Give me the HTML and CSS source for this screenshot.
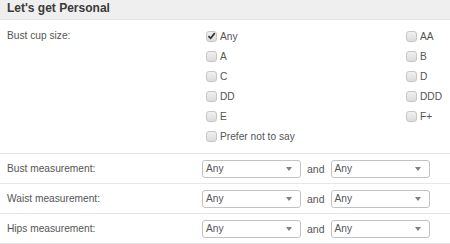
FILE: index.html
```html
<!DOCTYPE html>
<html lang="en">

<head>
    <meta charset="UTF-8">
    <meta name="viewport" content="width=device-width, initial-scale=1.0">
    <title>Let's get Personal</title>
    <link rel="stylesheet" href="styles.css">
</head>

<body>
    <div class="panel">
        <h2 class="panel-title">Let's get Personal</h2>

        <div class="row cup-row">
            <div class="row-label">Bust cup size:</div>
            <div class="cup-grid">
                <label class="option"><span class="box checked"><svg viewBox="0 0 10 10" width="10" height="10"><path d="M1.6 5.2 L4 7.6 L8.6 1.8" fill="none" stroke="#333" stroke-width="1.9"/></svg></span>Any</label>
                <label class="option"><span class="box"></span>AA</label>
                <label class="option"><span class="box"></span>A</label>
                <label class="option"><span class="box"></span>B</label>
                <label class="option"><span class="box"></span>C</label>
                <label class="option"><span class="box"></span>D</label>
                <label class="option"><span class="box"></span>DD</label>
                <label class="option"><span class="box"></span>DDD</label>
                <label class="option"><span class="box"></span>E</label>
                <label class="option"><span class="box"></span>F+</label>
                <label class="option"><span class="box"></span>Prefer not to say</label>
            </div>
        </div>

        <div class="row range-row">
            <div class="row-label">Bust measurement:</div>
            <div class="range">
                <div class="select">Any</div>
                <span class="and">and</span>
                <div class="select">Any</div>
            </div>
        </div>

        <div class="row range-row">
            <div class="row-label">Waist measurement:</div>
            <div class="range">
                <div class="select">Any</div>
                <span class="and">and</span>
                <div class="select">Any</div>
            </div>
        </div>

        <div class="row range-row">
            <div class="row-label">Hips measurement:</div>
            <div class="range">
                <div class="select">Any</div>
                <span class="and">and</span>
                <div class="select">Any</div>
            </div>
        </div>
    </div>
</body>

</html>
```

FILE: styles.css
```css
body {
    margin: 0;
    font-family: "Liberation Sans", Arial, sans-serif;
    font-size: 10.2px;
    color: #555;
    background-color: #fff;
}

.panel {
    width: 450px;
}

.panel-title {
    margin: 0;
    height: 19px;
    padding-left: 7px;
    font-size: 12px;
    line-height: 17px;
    font-weight: bold;
    color: #3a3a3a;
    background-color: #efefef;
    border-bottom: 1px solid #e2e2e2;
}

.row {
    display: flex;
    border-bottom: 1px solid #e6e6e6;
}

.row-label {
    width: 195px;
    padding-left: 7px;
}

.cup-row {
    padding: 6px 0 7px;
}

.cup-row .row-label {
    line-height: 20px;
}

.cup-grid {
    display: grid;
    grid-template-columns: 200px auto;
}

.option {
    display: flex;
    align-items: center;
    height: 20px;
}

.box {
    box-sizing: border-box;
    width: 11px;
    height: 11px;
    margin: 0 3px 0 4px;
    border: 1px solid #c6c6c6;
    border-radius: 3px;
    background: linear-gradient(#f0f0f0, #dcdcdc);
    display: flex;
    align-items: center;
    justify-content: center;
}

.box svg {
    display: block;
}

.range-row {
    height: 29px;
    align-items: center;
}

.range {
    display: flex;
    align-items: center;
}

.select {
    position: relative;
    box-sizing: border-box;
    width: 99px;
    height: 18px;
    padding-left: 3px;
    line-height: 16px;
    border: 1px solid #c2c2c2;
    border-radius: 3px;
    background-color: #fff;
}

.select::after {
    content: "";
    position: absolute;
    right: 8px;
    top: 6px;
    border-left: 3.5px solid transparent;
    border-right: 3.5px solid transparent;
    border-top: 4px solid #808080;
}

.and {
    margin: 0 6px;
    font-size: 10.5px;
}
```
